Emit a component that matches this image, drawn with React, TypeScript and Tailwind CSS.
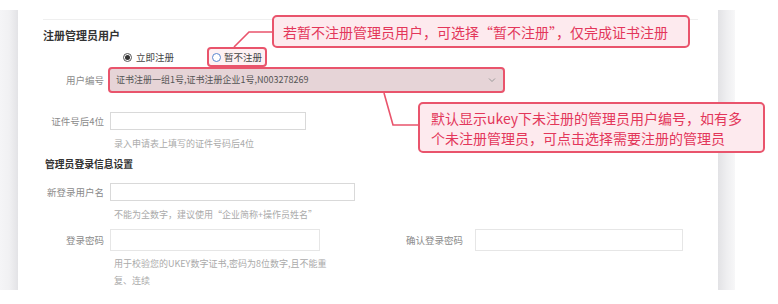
import React from 'react';

const cjk = { fontFamily: '"Noto Sans CJK SC", "Liberation Sans", sans-serif' };

function Label({ children }: { children: React.ReactNode }) {
  return <div className="w-[61px] shrink-0 text-right text-[9.5px] leading-[12px] text-[#8a8a8a]">{children}</div>;
}

function Help({ children }: { children: React.ReactNode }) {
  return <div className="pl-[71px] text-[9px] leading-[12px] text-[#aaaaaa]">{children}</div>;
}

export default function App() {
  return (
    <div className="relative w-[778px] h-[304px] overflow-hidden bg-white" style={cjk}>
      <div className="flex pt-[10px] h-[290px]">
        <div className="w-[18px] bg-gradient-to-r from-[#f5f5f7] via-[#f1f1f3] to-[#e3e3e6]" />
        <div className="w-[700px] bg-white pl-[25px] pr-[20px]">
          <div className="mt-[9px] border-t border-[#efefef]" />

          {/* 注册管理员用户 */}
          <div className="mt-[8px] text-[11px] leading-[14px] font-bold text-[#333]">注册管理员用户</div>

          <div className="mt-[7px] flex h-[16px] items-center pl-[80px] text-[9.5px] text-[#444]">
            <div className="flex items-center gap-[4px]">
              <span className="flex h-[9px] w-[9px] items-center justify-center rounded-full border border-[#555]">
                <span className="h-[5px] w-[5px] rounded-full bg-[#333]" />
              </span>
              <span>立即注册</span>
            </div>
            <div className="ml-[33px] flex h-[20px] items-center gap-[3px] rounded-[4px] border-2 border-[#e9546c] bg-[#fdf1f3] px-[3px]">
              <span className="h-[9px] w-[9px] rounded-full border border-[#5a86cf] bg-white" />
              <span>暂不注册</span>
            </div>
          </div>

          <div className="mt-[2px] flex items-center">
            <Label>用户编号</Label>
            <div className="ml-[4px] flex h-[26px] w-[397px] items-center justify-between rounded-[4px] border-2 border-[#e9546c] bg-[#e6d4d7] pl-[6px] pr-[6px] text-[9px] text-[#555]">
              <span>证书注册一组1号,证书注册企业1号,N003278269</span>
              <svg width="8" height="6" viewBox="0 0 8 6" className="mr-[1px]">
                <path d="M1 1.5 L4 4.5 L7 1.5" fill="none" stroke="#9a9a9a" strokeWidth="1" />
              </svg>
            </div>
          </div>

          <div className="mt-[19px] flex items-center">
            <Label>证件号后4位</Label>
            <div className="ml-[6px] h-[18px] w-[196px] border border-[#d9d9d9] bg-white" />
          </div>
          <div className="mt-[8px]">
            <Help>录入申请表上填写的证件号码后4位</Help>
          </div>

          {/* 管理员登录信息设置 */}
          <div className="mt-[7px] pl-[2px] text-[9.8px] leading-[14px] font-bold text-[#333]">管理员登录信息设置</div>

          <div className="mt-[12px] flex items-center">
            <Label>新登录用户名</Label>
            <div className="ml-[6px] h-[18px] w-[245px] border border-[#d9d9d9] bg-white" />
          </div>
          <div className="mt-[8px]">
            <Help>不能为全数字，建议使用“企业简称+操作员姓名”</Help>
          </div>

          <div className="mt-[8px] flex items-center">
            <Label>登录密码</Label>
            <div className="ml-[6px] h-[22px] w-[210px] border border-[#e6e6e6] bg-white" />
            <div className="w-[143px] text-right text-[9.5px] leading-[12px] text-[#8a8a8a]">确认登录密码</div>
            <div className="ml-[12px] h-[22px] w-[208px] border border-[#e6e6e6] bg-white" />
          </div>
          <div className="mt-[4px] w-[290px] pl-[71px] text-[9px] leading-[17px] text-[#aaaaaa]">
            用于校验您的UKEY数字证书,密码为8位数字,且不能重复、连续
          </div>
        </div>
        <div className="w-[17px] bg-gradient-to-r from-[#e2e2e5] via-[#eeeef0] to-[#f7f7f8]" />
      </div>

      {/* annotation connectors */}
      <svg className="absolute left-0 top-0" width="778" height="304" viewBox="0 0 778 304">
        <path d="M273 32 L249 32 L234 47" fill="none" stroke="#e9546c" strokeWidth="1.6" />
        <path d="M384 93 L393 125 L419 125" fill="none" stroke="#e9546c" strokeWidth="1.6" />
      </svg>

      {/* callout 1 */}
      <div className="absolute left-[272px] top-[15px] flex h-[33px] w-[418px] items-center rounded-[5px] border-2 border-[#e9546c] bg-[#fdeaee] pl-[9px] text-[14px] leading-[18px] text-[#e3365a]">
        若暂不注册管理员用户，可选择“暂不注册”，仅完成证书注册
      </div>

      {/* callout 2 */}
      <div className="absolute left-[418px] top-[102px] h-[51px] w-[347px] rounded-[5px] border-2 border-[#e9546c] bg-[#fdeaee] pl-[11px] pt-[4px] text-[14px] leading-[20px] text-[#e3365a]">
        <div>默认显示ukey下未注册的管理员用户编号，如有多</div>
        <div>个未注册管理员，可点击选择需要注册的管理员</div>
      </div>
    </div>
  );
}
